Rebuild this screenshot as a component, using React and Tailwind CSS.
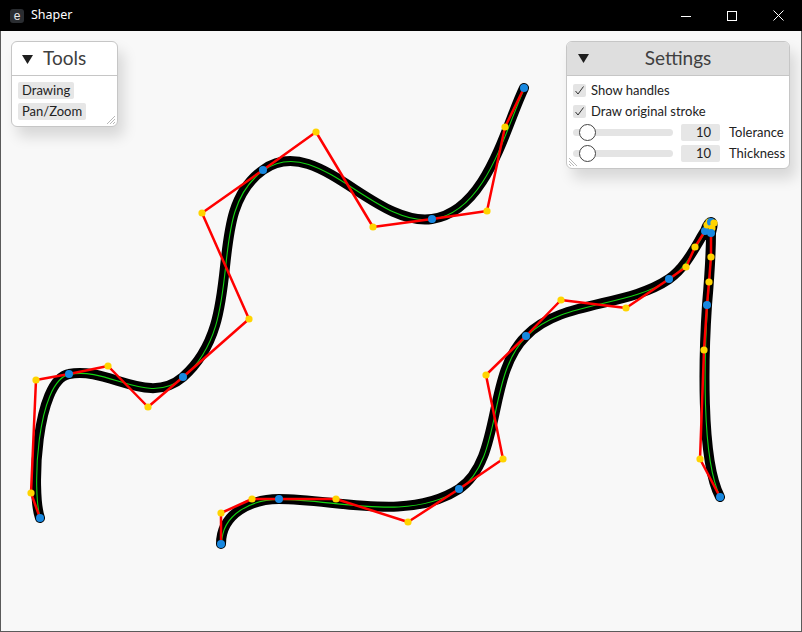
import React from 'react';

const STROKES = [
  [
    [40, 518], [31, 493], [36, 380], [69, 374], [108, 366], [148, 407], [183, 377],
    [249, 319], [202, 213], [263, 170], [316, 132], [373, 227], [432, 219],
    [487, 211], [505, 127], [524, 88],
  ],
  [
    [221, 544], [221, 513], [252, 499], [279, 499], [336, 499], [408, 522], [459, 489],
    [503, 459], [486, 375], [526, 336], [561, 300], [626, 308], [669, 279],
    [686, 267], [695, 247], [705, 231], [707, 225], [709, 222], [711, 222],
    [714, 223], [712, 228], [711, 233], [711, 257], [709, 282], [707, 305],
    [704, 350], [700, 459], [720, 497],
  ],
];

function bezierPath(pts, dx = 0, dy = 0) {
  const p = (i) => `${pts[i][0] + dx},${pts[i][1] + dy}`;
  let d = `M${p(0)}`;
  for (let i = 1; i + 2 < pts.length; i += 3) {
    d += ` C${p(i)} ${p(i + 1)} ${p(i + 2)}`;
  }
  return d;
}

function Canvas() {
  return (
    <svg className="absolute inset-0" width="800" height="600" viewBox="1 31 800 600">
      {STROKES.map((pts, i) => (
        <path
          key={`b${i}`}
          d={bezierPath(pts)}
          fill="none"
          stroke="#000"
          strokeWidth="10"
          strokeLinecap="round"
          strokeLinejoin="round"
        />
      ))}
      {STROKES.map((pts, i) => (
        <path key={`g${i}`} d={bezierPath(pts, 0.6, 0.4)} fill="none" stroke="#12d312" strokeWidth="1.1" />
      ))}
      {STROKES.map((pts, i) => (
        <polyline
          key={`r${i}`}
          points={pts.map((q) => q.join(',')).join(' ')}
          fill="none"
          stroke="#ff0000"
          strokeWidth="2.5"
          strokeLinejoin="round"
        />
      ))}
      {STROKES.map((pts, i) =>
        pts.map((q, j) => (
          <circle
            key={`d${i}-${j}`}
            cx={q[0]}
            cy={q[1]}
            r={j % 3 === 0 ? 4 : 3.6}
            fill={j % 3 === 0 ? '#1888e0' : '#ffd400'}
          />
        ))
      )}
    </svg>
  );
}

function Triangle({ className = '' }) {
  return (
    <svg className={className} width="11" height="9" viewBox="0 0 11 9">
      <path d="M0 0 H11 L5.5 9 Z" fill="#1e1e1e" />
    </svg>
  );
}

function Grip({ flip }) {
  return (
    <svg
      className={`absolute bottom-[1px] ${flip ? 'left-[1px] -scale-x-100' : 'right-[1px]'}`}
      width="12"
      height="12"
      viewBox="0 0 12 12"
    >
      <path d="M11 3 L3 11 M11 6 L6 11 M11 9 L9 11" stroke="#b8b8b8" strokeWidth="1" fill="none" />
    </svg>
  );
}

function Check() {
  return (
    <span className="w-[13px] h-[13px] bg-[#e4e4e4] rounded-[2px] flex items-center justify-center">
      <svg width="11" height="11" viewBox="0 0 11 11">
        <path d="M1.5 6 L4 9 L9.5 1.5" stroke="#333" strokeWidth="1" fill="none" />
      </svg>
    </span>
  );
}

function Slider({ label }) {
  return (
    <div className="h-[17px] flex items-center">
      <div className="relative w-[100px] h-[7px] rounded-full bg-[#e4e4e4]">
        <span className="absolute left-[6px] top-[-5px] w-[17px] h-[17px] rounded-full bg-white border border-[#444]" />
      </div>
      <div className="ml-[8px] w-[39px] h-[17px] bg-[#e6e6e6] rounded-[2px] text-[13px] leading-[17px] text-[#222] text-center pl-[6px]">
        10
      </div>
      <span className="ml-[9px] text-[13px] text-[#222]">{label}</span>
    </div>
  );
}

export default function App() {
  return (
    <div className="w-[802px] h-[632px] bg-black flex flex-col" style={{ fontFamily: 'Lato, "Noto Sans", sans-serif' }}>
      <div className="h-[31px] flex items-center text-white shrink-0">
        <span className="ml-[10px] w-[14px] h-[14px] rounded-[3px] bg-[#2a2d31] flex items-center justify-center text-[12px] leading-none text-[#e8e8e8]" style={{ fontFamily: '"Liberation Sans", sans-serif' }}>
          e
        </span>
        <span className="ml-[7px] text-[12.5px]" style={{ fontFamily: '"Noto Sans", sans-serif' }}>Shaper</span>
        <div className="ml-auto flex items-center">
          <svg className="mr-[36px]" width="10" height="10" viewBox="0 0 10 10">
            <path d="M0 5.5 H10" stroke="#fff" strokeWidth="1" />
          </svg>
          <svg className="mr-[36px]" width="10" height="10" viewBox="0 0 10 10">
            <rect x="0.5" y="0.5" width="9" height="9" stroke="#fff" strokeWidth="1" fill="none" />
          </svg>
          <svg className="mr-[18px]" width="11" height="11" viewBox="0 0 11 11">
            <path d="M0.5 0.5 L10.5 10.5 M10.5 0.5 L0.5 10.5" stroke="#fff" strokeWidth="1" />
          </svg>
        </div>
      </div>
      <div className="relative flex-1 bg-[#f8f8f8] border-x border-b border-[#5a5a5a] overflow-hidden">
        <Canvas />

        <div className="absolute left-[10px] top-[10px] w-[107px] bg-white border border-[#c6c6c6] rounded-[6px] shadow-[6px_10px_14px_rgba(0,0,0,0.13)]">
          <div className="h-[33px] flex items-center pl-[10px] text-[#404040]">
            <Triangle className="mt-[1px]" />
            <span className="ml-[10px] text-[19px]">Tools</span>
          </div>
          <div className="border-t border-[#c6c6c6] pt-[6px] pb-[6px] pl-[6px] flex flex-col gap-[4px] items-start relative">
            <span className="h-[17px] px-[4px] bg-[#e6e6e6] rounded-[2px] text-[13px] leading-[17px] text-[#222]">Drawing</span>
            <span className="h-[17px] px-[4px] bg-[#e6e6e6] rounded-[2px] text-[13px] leading-[17px] text-[#222]">Pan/Zoom</span>
            <Grip />
          </div>
        </div>

        <div className="absolute left-[565px] top-[10px] w-[224px] bg-white border border-[#c6c6c6] rounded-[6px] shadow-[6px_10px_14px_rgba(0,0,0,0.13)] overflow-hidden">
          <div className="h-[33px] relative flex items-center justify-center bg-[#dedede] text-[#404040]">
            <Triangle className="absolute left-[11px] top-[12px]" />
            <span className="text-[19px]">Settings</span>
          </div>
          <div className="border-t border-[#c6c6c6] pt-[6px] pb-[6px] pl-[6px] flex flex-col gap-[4px] relative">
            <div className="h-[17px] flex items-center gap-[5px] text-[13px] text-[#222]">
              <Check />
              <span>Show handles</span>
            </div>
            <div className="h-[17px] flex items-center gap-[5px] text-[13px] text-[#222]">
              <Check />
              <span>Draw original stroke</span>
            </div>
            <Slider label="Tolerance" />
            <Slider label="Thickness" />
            <Grip flip />
          </div>
        </div>
      </div>
    </div>
  );
}
